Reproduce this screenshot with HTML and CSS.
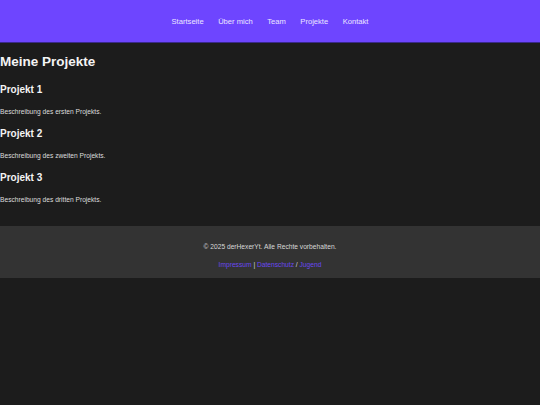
FILE: index.html
```html
<!DOCTYPE html>
<html lang="de">
<head>
<meta charset="utf-8">
<title>Meine Projekte</title>
<link rel="stylesheet" href="styles.css">
</head>
<body>
<header class="site-header">
  <nav class="nav">
    <a href="#">Startseite</a>
    <a href="#">Über mich</a>
    <a href="#">Team</a>
    <a href="#">Projekte</a>
    <a href="#">Kontakt</a>
  </nav>
</header>
<main class="content">
  <h1 class="title">Meine Projekte</h1>
  <section class="project">
    <h2>Projekt 1</h2>
    <p>Beschreibung des ersten Projekts.</p>
  </section>
  <section class="project">
    <h2>Projekt 2</h2>
    <p>Beschreibung des zweiten Projekts.</p>
  </section>
  <section class="project">
    <h2>Projekt 3</h2>
    <p>Beschreibung des dritten Projekts.</p>
  </section>
</main>
<footer class="site-footer">
  <p class="copy">© 2025 derHexerYt. Alle Rechte vorbehalten.</p>
  <p class="links"><a href="#">Impressum</a> | <a href="#">Datenschutz</a> / <a href="#">Jugend</a></p>
</footer>
</body>
</html>
```
FILE: styles.css
```css
html, body {
  margin: 0;
  padding: 0;
}
body {
  background: #1c1c1c;
  color: #f0f0f0;
  font-family: "Liberation Sans", Arial, sans-serif;
}
.site-header {
  background: #6e45ff;
  height: 42px;
  border-bottom: 1px solid #3a2a8a;
  display: flex;
  align-items: center;
  justify-content: center;
}
.nav {
  display: flex;
  gap: 14.5px;
}
.nav a {
  color: #ece6ff;
  text-decoration: none;
  font-size: 7.6px;
  line-height: 9px;
}
.content {
  padding: 0 0 10px;
}
.title {
  font-size: 13.5px;
  line-height: 16px;
  margin: 11px 0 14px;
  color: #f4f4f4;
}
.project h2 {
  font-size: 10px;
  line-height: 12px;
  margin: 12px 0;
  color: #f4f4f4;
}
.project p {
  font-size: 6.67px;
  line-height: 8px;
  margin: 12px 0;
  color: #dcdcdc;
}
.site-footer {
  background: #333333;
  padding: 16.5px 0 9px;
  text-align: center;
  font-size: 6.67px;
  line-height: 8px;
  color: #d8d8d8;
}
.site-footer p {
  margin: 0;
}
.site-footer .copy {
  margin-bottom: 10.5px;
}
.links a {
  color: #6a48f0;
  text-decoration: none;
}
```
